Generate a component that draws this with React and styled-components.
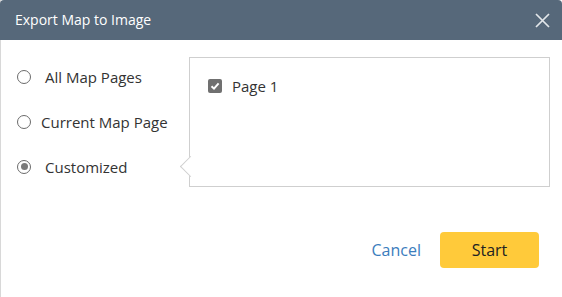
import React from 'react'
import styled, { createGlobalStyle } from 'styled-components'

const Global = createGlobalStyle`
    html, body {
        margin: 0;
        padding: 0;
        background: #ffffff;
    }
    body {
        font-family: "Open Sans", "Noto Sans", sans-serif;
    }
`;

const Dialog = styled.div`
    width: 562px;
    height: 297px;
    box-sizing: border-box;
    border-left: 1px solid #d8d8d8;
    display: flex;
    flex-direction: column;
    background: #fff;
`;

const Header = styled.div`
    height: 40px;
    flex: none;
    background-color: #56687a;
    border-radius: 4px 4px 0 0;
    margin-left: -1px;
    display: flex;
    align-items: center;
    justify-content: space-between;
    padding: 0 10px 0 15px;
`;

const Title = styled.span`
    color: #fff;
    font-size: 14px;
    padding-bottom: 1px;
`;

const Close = styled.button`
    border: none;
    background: none;
    padding: 0;
    width: 20px;
    height: 20px;
    display: flex;
    align-items: center;
    justify-content: center;
    cursor: pointer;
`;

const Body = styled.div`
    display: flex;
    padding-top: 17px;
`;

const Options = styled.div`
    width: 188px;
    flex: none;
    display: flex;
    flex-direction: column;
    margin-top: -3px;
`;

const Option = styled.label`
    height: 45px;
    display: flex;
    align-items: center;
    padding-left: 16px;
    font-size: 15px;
    color: #333;
    gap: ${p => p.$gap}px;
    cursor: pointer;
`;

const Radio = styled.span`
    width: 14px;
    height: 14px;
    box-sizing: border-box;
    border-radius: 50%;
    border: 1.5px solid #6b6b6b;
    display: flex;
    align-items: center;
    justify-content: center;
    &::after {
        content: '';
        width: 7px;
        height: 7px;
        border-radius: 50%;
        background: ${p => (p.$checked ? '#7a7a7a' : 'transparent')};
    }
`;

const Panel = styled.div`
    position: relative;
    width: 361px;
    height: 130px;
    box-sizing: border-box;
    border: 1px solid #cfcfcf;
    padding: 18px 18px;

    &::before {
        content: '';
        position: absolute;
        left: -7px;
        top: 101px;
        width: 14px;
        height: 14px;
        background: #fff;
        border-left: 1px solid #cfcfcf;
        border-bottom: 1px solid #cfcfcf;
        transform: rotate(45deg);
    }
`;

const CheckRow = styled.label`
    display: flex;
    align-items: center;
    gap: 10px;
    font-size: 15px;
    color: #333;
`;

const Check = styled.span`
    width: 14px;
    height: 14px;
    border-radius: 2px;
    background: #707070;
    display: flex;
    align-items: center;
    justify-content: center;
`;

const Footer = styled.div`
    display: flex;
    justify-content: flex-end;
    align-items: center;
    gap: 19px;
    padding: 43px 23px 0 0;
`;

const Cancel = styled.button`
    border: none;
    background: none;
    padding: 0;
    font-family: inherit;
    font-size: 16px;
    color: #3b7dbd;
    cursor: pointer;
`;

const Start = styled.button`
    width: 99px;
    height: 36px;
    border: none;
    border-radius: 4px;
    background: #ffca3a;
    font-family: inherit;
    font-size: 16px;
    color: #222;
    cursor: pointer;
`;

const options = [
    { label: 'All Map Pages', gap: 14, checked: false },
    { label: 'Current Map Page', gap: 10, checked: false },
    { label: 'Customized', gap: 14, checked: true },
];

const App = () => {
  return (
    <>
      <Global />
      <Dialog>
        <Header>
          <Title>Export Map to Image</Title>
          <Close aria-label="close">
            <svg width="15" height="15" viewBox="0 0 15 15">
              <path d="M1 1 L14 14 M14 1 L1 14" stroke="#e3e7ea" strokeWidth="1.7" />
            </svg>
          </Close>
        </Header>
        <Body>
          <Options>
            {options.map(o => (
              <Option key={o.label} $gap={o.gap}>
                <Radio $checked={o.checked} />
                {o.label}
              </Option>
            ))}
          </Options>
          <Panel>
            <CheckRow>
              <Check>
                <svg width="10" height="10" viewBox="0 0 10 10">
                  <path d="M1.5 5.2 L4 7.6 L8.6 2.4" stroke="#fff" strokeWidth="2" fill="none" />
                </svg>
              </Check>
              Page 1
            </CheckRow>
          </Panel>
        </Body>
        <Footer>
          <Cancel>Cancel</Cancel>
          <Start>Start</Start>
        </Footer>
      </Dialog>
    </>
  )
};

export default App;
